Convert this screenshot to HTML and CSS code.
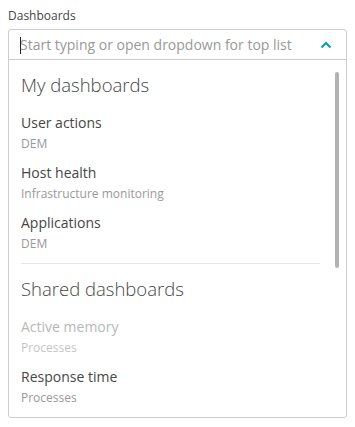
FILE: index.html
```html
<!DOCTYPE html>
<html lang="en">
<head>
  <meta charset="UTF-8">
  <meta name="viewport" content="width=device-width, initial-scale=1.0">
  <title>Dashboards picker</title>
  <link rel="stylesheet" href="styles.css">
</head>
<body>
  <div class="field">
    <label class="field-label" for="dashboardSearch">Dashboards</label>

    <div class="combo">
      <div class="combo-input">
        <span class="caret"></span>
        <input type="text" id="dashboardSearch" placeholder="Start typing or open dropdown for top list" />
        <svg class="chevron" width="12" height="8" viewBox="0 0 12 8">
          <path d="M1.5 6.5 L6 2 L10.5 6.5" fill="none" stroke="#00a1b2" stroke-width="2" />
        </svg>
      </div>

      <div class="combo-list">
        <div class="list-scroll">
          <h3 class="group-title">My dashboards</h3>
          <div class="option">
            <div class="option-name">User actions</div>
            <div class="option-sub">DEM</div>
          </div>
          <div class="option">
            <div class="option-name">Host health</div>
            <div class="option-sub">Infrastructure monitoring</div>
          </div>
          <div class="option">
            <div class="option-name">Applications</div>
            <div class="option-sub">DEM</div>
          </div>

          <div class="divider"></div>

          <h3 class="group-title">Shared dashboards</h3>
          <div class="option disabled">
            <div class="option-name">Active memory</div>
            <div class="option-sub">Processes</div>
          </div>
          <div class="option">
            <div class="option-name">Response time</div>
            <div class="option-sub">Processes</div>
          </div>
        </div>
        <div class="scrollbar"><div class="thumb"></div></div>
      </div>
    </div>
  </div>
</body>
</html>
```

FILE: styles.css
```css
* {
  margin: 0;
  padding: 0;
  box-sizing: border-box;
}

body {
  font-family: "Open Sans", "Liberation Sans", Arial, sans-serif;
  background: #fff;
  color: #454646;
  padding: 8px;
}

.field-label {
  display: block;
  font-size: 12px;
  line-height: 16px;
  color: #454646;
  margin-bottom: 5px;
}

.combo {
  border: 1px solid #cccccc;
  border-radius: 3px;
}

.combo-input {
  position: relative;
  display: flex;
  align-items: center;
  height: 30px;
  padding: 0 14px 0 11px;
  border-bottom: 1px solid #cccccc;
}

.combo-input input {
  flex: 1;
  border: none;
  outline: none;
  font-family: inherit;
  font-size: 14px;
  color: #454646;
  background: transparent;
}

.combo-input input::placeholder {
  color: #999999;
}

.caret {
  position: absolute;
  left: 11px;
  top: 7px;
  width: 1px;
  height: 17px;
  background: #222;
}

.chevron {
  flex-shrink: 0;
  margin-left: 8px;
}

.combo-list {
  display: flex;
  height: 357px;
  overflow: hidden;
}

.list-scroll {
  flex: 1;
  padding: 12px 0 0 12px;
}

.group-title {
  font-size: 18.5px;
  font-weight: 300;
  line-height: 26px;
  color: #454646;
  margin-bottom: 7px;
}

.option {
  padding: 8px 0 0;
  height: 50px;
}

.option-name {
  font-size: 14px;
  line-height: 20px;
  color: #454646;
}

.option-sub {
  margin-top: 2px;
  font-size: 12px;
  line-height: 18px;
  color: #999999;
}

.option.disabled .option-name {
  color: #b7b7b7;
}

.option.disabled .option-sub {
  color: #c4c4c4;
}

.divider {
  height: 1px;
  background: #e6e6e6;
  margin: 8px 0 12px;
  width: 299px;
}

.scrollbar {
  width: 16px;
  padding: 12px 0 0 5px;
}

.thumb {
  width: 4px;
  height: 196px;
  background: #b3b3b3;
  border-radius: 2px;
}
```
